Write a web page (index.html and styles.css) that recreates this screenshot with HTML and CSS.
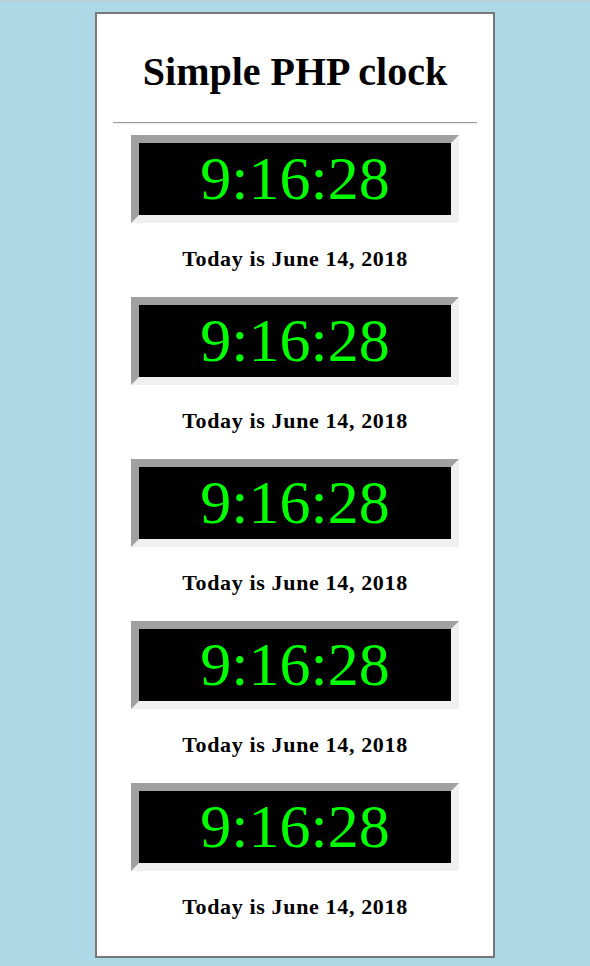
FILE: index.html
```html
<!DOCTYPE html>
<html>
<head>
<meta charset="utf-8">
<title>Simple PHP clock</title>
<link rel="stylesheet" href="styles.css">
</head>
<body>
<div class="page">
  <h1 class="title">Simple PHP clock</h1>
  <hr class="rule">
  <div class="item">
    <div class="clock">9:16:28</div>
    <div class="date">Today is June 14, 2018</div>
  </div>
  <div class="item">
    <div class="clock">9:16:28</div>
    <div class="date">Today is June 14, 2018</div>
  </div>
  <div class="item">
    <div class="clock">9:16:28</div>
    <div class="date">Today is June 14, 2018</div>
  </div>
  <div class="item">
    <div class="clock">9:16:28</div>
    <div class="date">Today is June 14, 2018</div>
  </div>
  <div class="item">
    <div class="clock">9:16:28</div>
    <div class="date">Today is June 14, 2018</div>
  </div>
</div>
</body>
</html>
```
FILE: styles.css
```css
html, body {
  margin: 0;
  padding: 0;
}
body {
  background: #add8e6;
  border-top: 1px solid #c8c8c8;
  font-family: "Liberation Serif", "Times New Roman", serif;
  color: #000;
  min-height: 965px;
  box-sizing: border-box;
}
.page {
  width: 400px;
  box-sizing: border-box;
  margin: 11px auto 0;
  background: #fff;
  border: 2px solid #777;
  padding: 0 16px 11px;
}
.title {
  font-size: 40px;
  font-weight: bold;
  text-align: center;
  margin: 35px 0 0;
  line-height: 46px;
}
.rule {
  margin: 27px 0 11px;
  border: 0;
  border-top: 1px solid #9a9a9a;
  border-bottom: 1px solid #eee;
  height: 0;
}
.item {
  display: flex;
  flex-direction: column;
  align-items: center;
  margin-bottom: 26px;
}
.clock {
  width: 312px;
  height: 72px;
  line-height: 70px;
  background: #000;
  color: #00ff00;
  font-size: 62px;
  text-align: center;
  border-style: solid;
  border-width: 8px;
  border-color: #a0a0a0 #f0f0f0 #f0f0f0 #a0a0a0;
}
.date {
  margin-top: 23px;
  font-size: 22px;
  font-weight: bold;
  letter-spacing: 0.65px;
  line-height: 25px;
  text-align: center;
}
```
